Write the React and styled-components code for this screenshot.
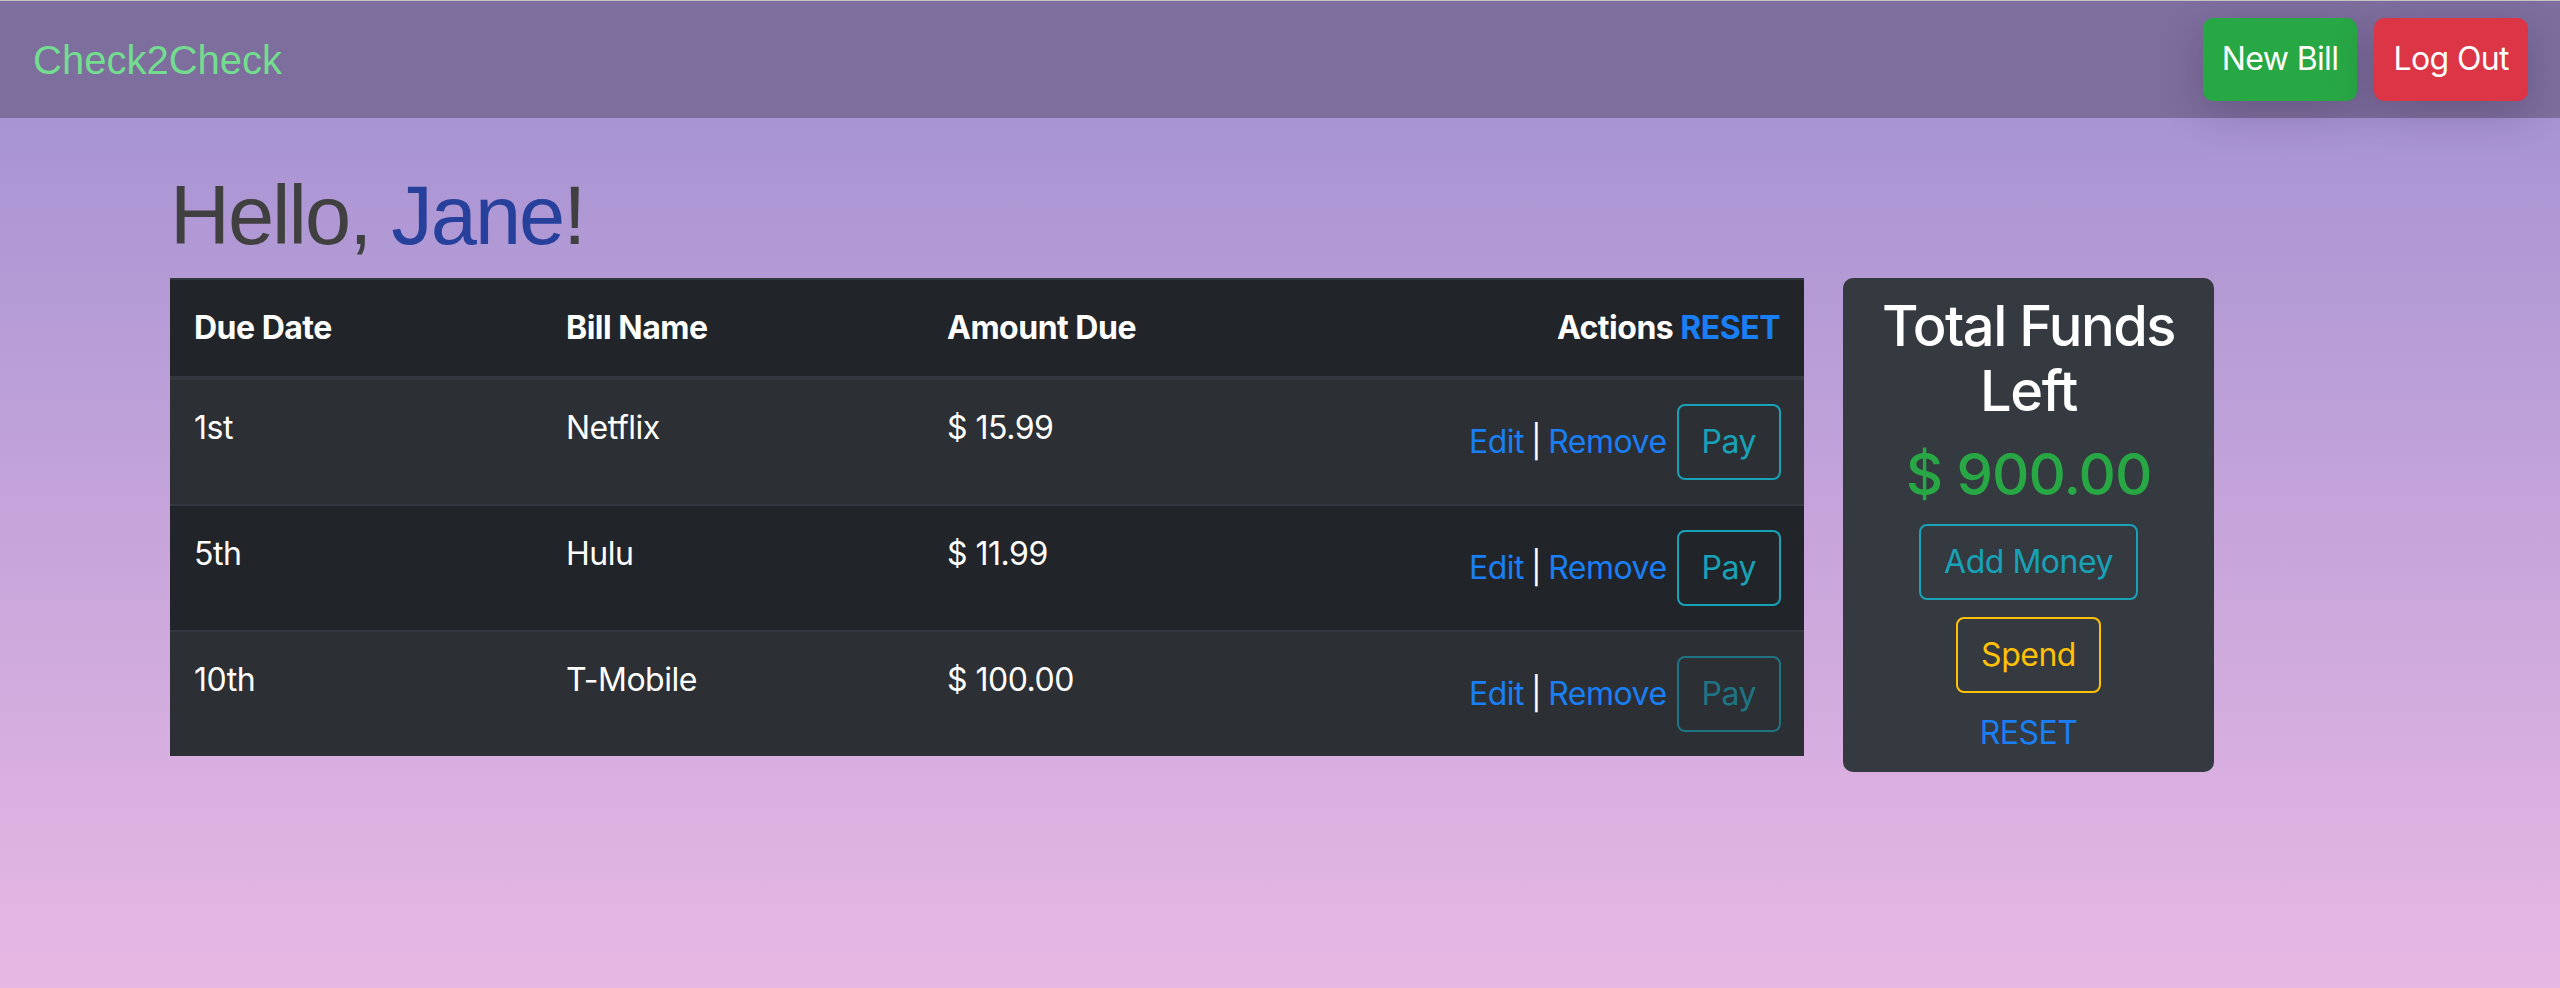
import React from 'react';
import styled, { createGlobalStyle } from 'styled-components';

const GlobalStyle = createGlobalStyle`
  * { box-sizing: border-box; }
  html, body { margin: 0; padding: 0; }
  body {
    font-family: Inter, "Noto Sans", sans-serif;
    color: #fff;
  }
`;

const Page = styled.div`
  min-height: 988px;
  background: linear-gradient(180deg, #9f8fd0 0px, #e8b8e4 988px);
`;

const Navbar = styled.nav`
  display: flex;
  align-items: center;
  justify-content: space-between;
  height: 118px;
  padding: 0 32px 0 33px;
  background: #7d6e9d;
  border-top: 1px solid #c6c6c6;
`;

const Brand = styled.a`
  font-family: "Liberation Sans", Arial, sans-serif;
  font-size: 40px;
  line-height: 48px;
  color: #73dc8f;
  text-decoration: none;
`;

const NavActions = styled.div`
  display: flex;
  gap: 17px;
`;

const NavButton = styled.button`
  font-family: Inter, sans-serif;
  font-size: 32px;
  line-height: 48px;
  letter-spacing: -0.6px;
  padding: 17px 19px 18px;
  border: 0;
  border-radius: 10px;
  color: #fff;
  background: ${p => p.$bg};
  box-shadow: 0 14px 40px rgba(40, 20, 60, 0.22);
  cursor: pointer;
`;

const Container = styled.main`
  padding: 48px 170px 0;
`;

const Greeting = styled.h1`
  margin: 0 0 12px;
  font-family: "Liberation Sans", Arial, sans-serif;
  font-size: 83px;
  line-height: 100px;
  font-weight: 400;
  letter-spacing: -2px;
  color: #404040;
`;

const Name = styled.span`
  color: #27409b;
`;

const Row = styled.div`
  display: flex;
  align-items: flex-start;
  gap: 39px;
`;

const BillTable = styled.table`
  width: 1634px;
  border-collapse: collapse;
  table-layout: fixed;
  background: #212529;
  color: #fff;
  font-size: 32px;
  line-height: 48px;
  letter-spacing: -0.5px;
`;

const Col = styled.col`
  width: ${p => p.$w}px;
`;

const Th = styled.th`
  padding: 24px;
  text-align: ${p => p.$align || 'left'};
  font-weight: 700;
  vertical-align: bottom;
  border-top: 2px solid #32383e;
  border-bottom: 4px solid #32383e;
  white-space: nowrap;
`;

const Tr = styled.tr`
  background: ${p => (p.$striped ? '#2c3034' : '#212529')};
`;

const Td = styled.td`
  padding: 24px;
  border-top: 2px solid #32383e;
  vertical-align: top;
  text-align: ${p => p.$align || 'left'};
  white-space: nowrap;
`;

const TextLink = styled.a`
  color: #1a7ff5;
  text-decoration: none;
  cursor: pointer;
`;

const Divider = styled.span`
  color: #fff;
  margin: 0 7px;
`;

const OutlineButton = styled.button`
  font-family: Inter, sans-serif;
  font-size: 32px;
  line-height: 48px;
  letter-spacing: -0.5px;
  padding: 12px 23px;
  margin-left: ${p => p.$ml || 0}px;
  border: 2px solid ${p => p.$color};
  border-radius: 8px;
  color: ${p => p.$color};
  background: transparent;
  opacity: ${p => (p.disabled ? 0.6 : 1)};
  cursor: pointer;
`;

const FundsCard = styled.aside`
  width: 371px;
  background: #343a40;
  border-radius: 10px;
  padding: 16px 16px 15px;
  display: flex;
  flex-direction: column;
  align-items: center;
  text-align: center;
`;

const FundsTitle = styled.h3`
  margin: 0;
  font-size: 56px;
  line-height: 65px;
  font-weight: 500;
  letter-spacing: -1.5px;
  color: #fff;
`;

const FundsAmount = styled.h2`
  margin: 15px 0 0;
  font-size: 58px;
  line-height: 70px;
  font-weight: 500;
  letter-spacing: -1px;
  color: #28a745;
`;

const CardAction = styled.div`
  margin-top: ${p => p.$mt}px;
`;

const CardLink = styled(TextLink)`
  font-size: 32px;
  line-height: 48px;
  letter-spacing: -0.5px;
`;

const bills = [
  { due: '1st', name: 'Netflix', amount: '$ 15.99', striped: true },
  { due: '5th', name: 'Hulu', amount: '$ 11.99', striped: false },
  { due: '10th', name: 'T-Mobile', amount: '$ 100.00', striped: true, disabled: true },
];

export default function App() {
  return (
    <>
      <GlobalStyle />
      <Page>
        <Navbar>
          <Brand href="#">Check2Check</Brand>
          <NavActions>
            <NavButton $bg="#28a745">New Bill</NavButton>
            <NavButton $bg="#dc3545">Log Out</NavButton>
          </NavActions>
        </Navbar>
        <Container>
          <Greeting>
            Hello, <Name>Jane</Name>!
          </Greeting>
          <Row>
            <BillTable>
              <colgroup>
                <Col $w={372} />
                <Col $w={381} />
                <Col $w={522} />
                <Col $w={359} />
              </colgroup>
              <thead>
                <tr>
                  <Th>Due Date</Th>
                  <Th>Bill Name</Th>
                  <Th>Amount Due</Th>
                  <Th $align="right">
                    Actions <TextLink>RESET</TextLink>
                  </Th>
                </tr>
              </thead>
              <tbody>
                {bills.map(b => (
                  <Tr key={b.name} $striped={b.striped}>
                    <Td>{b.due}</Td>
                    <Td>{b.name}</Td>
                    <Td>{b.amount}</Td>
                    <Td $align="right">
                      <TextLink>Edit</TextLink>
                      <Divider>|</Divider>
                      <TextLink>Remove</TextLink>
                      <OutlineButton $color="#17a2b8" $ml={10} disabled={b.disabled}>
                        Pay
                      </OutlineButton>
                    </Td>
                  </Tr>
                ))}
              </tbody>
            </BillTable>
            <FundsCard>
              <FundsTitle>Total Funds Left</FundsTitle>
              <FundsAmount>$ 900.00</FundsAmount>
              <CardAction $mt={15}>
                <OutlineButton $color="#17a2b8">Add Money</OutlineButton>
              </CardAction>
              <CardAction $mt={17}>
                <OutlineButton $color="#ffc107">Spend</OutlineButton>
              </CardAction>
              <CardAction $mt={16}>
                <CardLink>RESET</CardLink>
              </CardAction>
            </FundsCard>
          </Row>
        </Container>
      </Page>
    </>
  );
}
